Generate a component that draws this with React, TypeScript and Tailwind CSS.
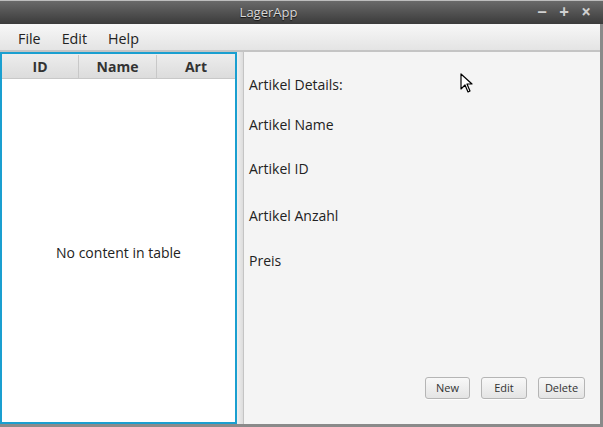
import React from "react"

const font = { fontFamily: '"Open Sans", "Noto Sans", sans-serif' }

const FxButton = ({ label, w }: { label: string; w: string }) => (
  <button
    className={`${w} h-[22px] rounded-[3px] border border-[#b5b5b5] bg-gradient-to-b from-[#f8f8f8] to-[#e4e4e4] text-[11px] text-[#333] shadow-[0_1px_0_rgba(255,255,255,0.8)]`}
  >
    {label}
  </button>
)

export default function App() {
  return (
    <div className="w-[603px] h-[427px] flex flex-col bg-[#f4f4f4] overflow-hidden relative" style={font}>
      {/* Title bar */}
      <div className="h-[24px] flex items-center relative bg-gradient-to-b from-[#6a6a6a] to-[#3b3b3b] border-t border-[#bdbdbd]">
        <div className="w-[537px] text-center text-[13px] text-[#d8d8d8] [text-shadow:0_1px_1px_#111]">LagerApp</div>
        <div className="absolute left-[531px] top-[1px] flex items-center text-[#d0d0d0] text-[17px] font-bold leading-[20px]">
          <span className="w-[22px] text-center">−</span>
          <span className="w-[22px] text-center">+</span>
          <span className="w-[22px] text-center">×</span>
        </div>
      </div>

      <div className="flex-1 flex flex-col border-r-[3px] border-[#8a8a8a] border-b-[3px]">
        {/* Menu bar */}
        <div className="h-[28px] flex items-center gap-[21px] pl-[18px] pt-[3px] bg-gradient-to-b from-[#f7f7f7] to-[#e4e4e4] border-b-[2px] border-[#c4c4c4] text-[14.3px] text-[#222]">
          <span>File</span>
          <span>Edit</span>
          <span>Help</span>
        </div>

        {/* Split pane */}
        <div className="flex-1 flex">
          {/* Table */}
          <div className="w-[237px] flex flex-col bg-white border-[2px] border-[#1a9fd0]">
            <div className="h-[25px] flex bg-gradient-to-b from-[#ededed] to-[#dcdcdc] border-b border-[#c8c8c8] text-[14px] font-bold text-[#333] pt-[1px]">
              <div className="w-[77px] flex items-center justify-center border-r border-[#c8c8c8]">ID</div>
              <div className="w-[78px] flex items-center justify-center border-r border-[#c8c8c8]">Name</div>
              <div className="flex-1 flex items-center justify-center">Art</div>
            </div>
            <div className="flex-1 flex items-center justify-center text-[14px] text-[#222] pt-[4px]">No content in table</div>
          </div>

          {/* Divider */}
          <div className="w-[7px] bg-gradient-to-r from-[#f0f0f0] to-[#dcdcdc] border-r border-[#c4c4c4]" />

          {/* Details */}
          <div className="flex-1 flex flex-col bg-[#f4f4f4] pl-[5px] text-[14px] text-[#222]">
            <div className="h-[43px] leading-[18px] pt-[24px]">Artikel Details:</div>
            <div className="mt-[21px] leading-[18px]">Artikel Name</div>
            <div className="mt-[26px] leading-[18px]">Artikel ID</div>
            <div className="mt-[29px] leading-[18px]">Artikel Anzahl</div>
            <div className="mt-[27px] leading-[18px]">Preis</div>
            <div className="flex-1" />
            <div className="flex justify-end gap-[11px] pr-[15px] pb-[25px]">
              <FxButton label="New" w="w-[45px]" />
              <FxButton label="Edit" w="w-[46px]" />
              <FxButton label="Delete" w="w-[47px]" />
            </div>
          </div>
        </div>
      </div>

      {/* Mouse cursor */}
      <svg className="absolute left-[460px] top-[73px]" width="14" height="22" viewBox="0 0 14 22">
        <path d="M1 1 L1 16 L5 12 L8 19 L10 18 L7 11 L12 11 Z" fill="#fff" stroke="#000" strokeWidth="1.2" strokeLinejoin="round" />
      </svg>
    </div>
  )
}
